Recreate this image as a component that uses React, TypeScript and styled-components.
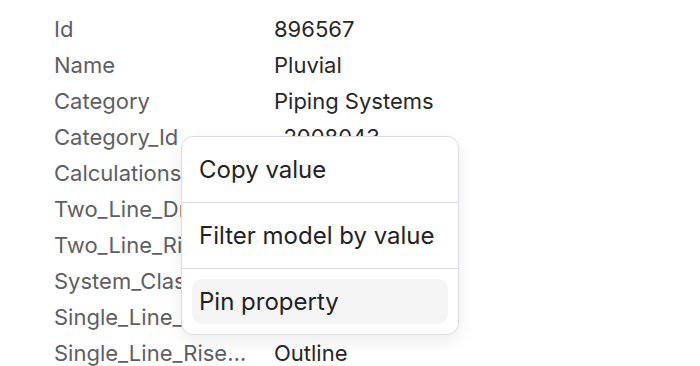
import React from 'react'
import styled, { createGlobalStyle } from 'styled-components'

const GlobalStyle = createGlobalStyle`
  html, body {
    margin: 0;
    background: #ffffff;
    font-family: Inter, "Noto Sans", sans-serif;
  }
`

const Wrapper = styled.div`
  position: relative;
  width: 700px;
  height: 366px;
  overflow: hidden;
  padding: 11px 0 0 54px;
  box-sizing: border-box;
`

const Table = styled.div`
  display: flex;
  flex-direction: column;
`

const Row = styled.div`
  display: grid;
  grid-template-columns: 198px 1fr;
  column-gap: 22px;
  height: 36px;
  align-items: center;
  font-size: 22px;
`

const Label = styled.div`
  color: #5d5e66;
  white-space: nowrap;
  overflow: hidden;
  text-overflow: ellipsis;
`

const Value = styled.div`
  color: #26272b;
  white-space: nowrap;
`

const Menu = styled.div`
  position: absolute;
  left: 181px;
  top: 136px;
  width: 278px;
  box-sizing: border-box;
  background: #ffffff;
  border: 1px solid #dcdce0;
  border-radius: 12px;
  box-shadow: 0 6px 18px rgba(0, 0, 0, 0.08);
  display: flex;
  flex-direction: column;
`

const Item = styled.div`
  padding: 10px;
`

const ItemLabel = styled.div<{ $active?: boolean }>`
  height: 45px;
  display: flex;
  align-items: center;
  padding: 0 7px;
  border-radius: 10px;
  font-size: 24px;
  color: #222226;
  white-space: nowrap;
  background: ${p => (p.$active ? '#f5f5f6' : 'transparent')};
`

const Divider = styled.div`
  border-bottom: 1px solid #dcdce0;
`

const rows = [
  ['Id', '896567'],
  ['Name', 'Pluvial'],
  ['Category', 'Piping Systems'],
  ['Category_Id', '-2008043'],
  ['Calculations', 'All'],
  ['Two_Line_Drop', 'Outline'],
  ['Two_Line_Rise', 'Outline'],
  ['System_Classification', 'Other'],
  ['Single_Line_Drop', 'Outline'],
  ['Single_Line_Rise_Symbol', 'Outline'],
]

const App = () => {
  return (
    <Wrapper>
      <GlobalStyle />
      <Table>
        {rows.map(([label, value]) => (
          <Row key={label}>
            <Label>{label}</Label>
            <Value>{value}</Value>
          </Row>
        ))}
      </Table>
      <Menu>
        <Item>
          <ItemLabel>Copy value</ItemLabel>
        </Item>
        <Divider />
        <Item>
          <ItemLabel>Filter model by value</ItemLabel>
        </Item>
        <Divider />
        <Item>
          <ItemLabel $active>Pin property</ItemLabel>
        </Item>
      </Menu>
    </Wrapper>
  )
}

export default App
